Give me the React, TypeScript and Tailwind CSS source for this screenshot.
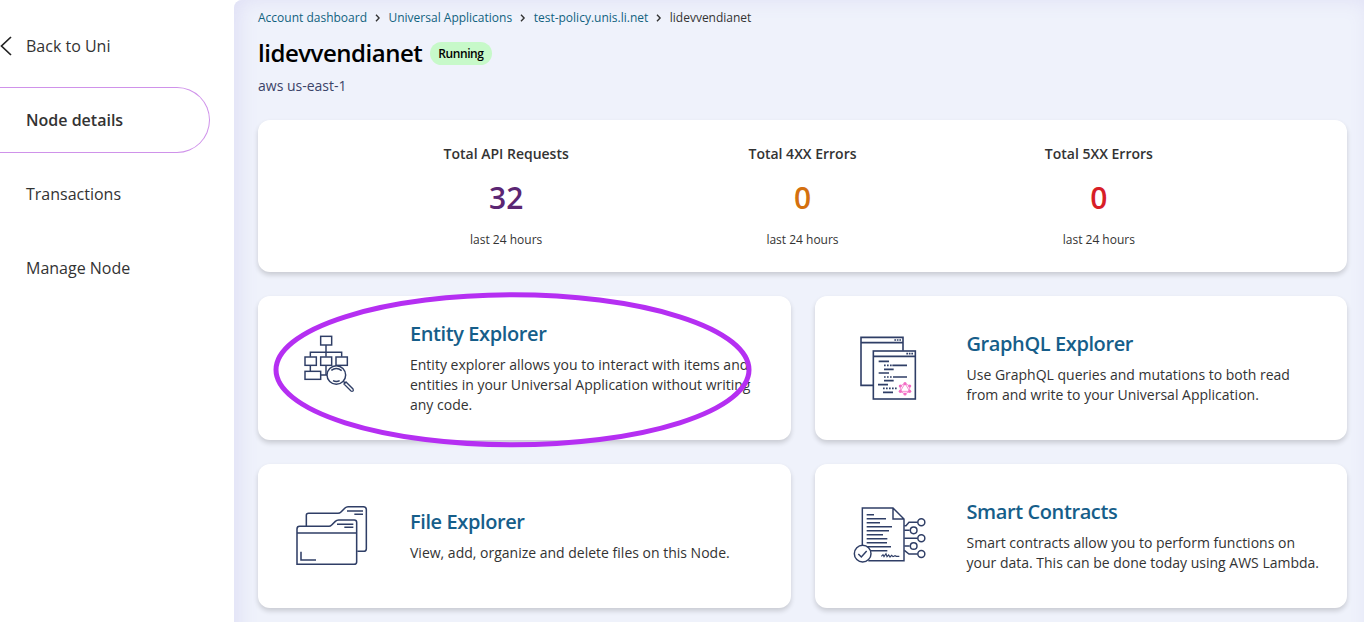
import React from "react";
import type { ReactNode } from "react";

const INK = "#2f3e66";

function Crumb({ children, last }: { children: ReactNode; last?: boolean }) {
  return (
    <>
      <span className={last ? "text-[#333]" : "text-[#11627f]"}>{children}</span>
      {!last && (
        <svg className="mx-[8px] h-[8px] w-[5.5px] shrink-0" viewBox="0 0 5.5 8" fill="none" stroke="#333" strokeWidth="1.4">
          <path d="M1 0.8 4.1 4 1 7.2" />
        </svg>
      )}
    </>
  );
}

function Stat({ label, value, color }: { label: string; value: string; color: string }) {
  return (
    <div className="flex flex-col items-center">
      <div className="text-[14px] leading-5 font-semibold text-[#333]">{label}</div>
      <div className={`mt-[14px] text-[30px] leading-10 font-semibold ${color}`}>{value}</div>
      <div className="mt-[14px] text-[12px] leading-4 text-[#333]">{"last 24 hours"}</div>
    </div>
  );
}

function Card({ title, text, icon, children }: { title: string; text: string; icon: ReactNode; children?: ReactNode }) {
  return (
    <section className="relative flex h-36 items-center rounded-xl bg-white shadow-[0_3px_5px_rgba(0,0,0,0.16)]">
      {icon}
      <div className="min-w-0 flex-1 pr-6 pb-0.5">
        <h2 className="text-[20px] leading-7 font-semibold tracking-[-0.02em] text-[#165e8a]">{title}</h2>
        <p className="mt-[7px] text-[14px] leading-5 whitespace-pre-line text-[#333]">{text}</p>
      </div>
      {children}
    </section>
  );
}

function EntityIcon() {
  return (
    <svg className="h-36 w-[152px] shrink-0" viewBox="-111 -87 456 432" fill="none" stroke={INK} strokeWidth="4.4">
      <rect x="77" y="34" width="33" height="26" />
      <path d="M93 60V95M46 95V82H140V95M46 121V139M93 121V150M77 150H97" />
      <rect x="30" y="96" width="34" height="25" />
      <rect x="77" y="96" width="33" height="25" />
      <rect x="123" y="96" width="34" height="25" />
      <rect x="30" y="139" width="47" height="24" />
      <circle cx="124" cy="150" r="28" fill="white" />
      <path d="M109 136Q124 124 140 137M114 167Q124 172 134 167" />
      <path d="M145 169 151 175" />
      <path d="M147 177 153 171 174 192Q176 196 174 198Q171 200 168 198Z" strokeWidth="4" />
    </svg>
  );
}

function GraphIcon() {
  return (
    <svg className="h-36 w-[152px] shrink-0" viewBox="-105 -96 456 432" fill="none" stroke={INK} strokeWidth="4.8">
      <path d="M159 68V28H33V172H69M33 44H159" />
      <path d="M133 36H155" strokeDasharray="5 2.5" />
      <rect x="70" y="69" width="126" height="144" fill="white" />
      <path d="M70 85H196" />
      <path d="M169 77H191" strokeDasharray="5 2.5" />
      <path d="M86 100H117M102 124H131M86 135H117M102 158H131M84 170H114M99 193H129" />
      <path d="M102 112H128M102 147H128M99 181H140" strokeDasharray="5 4" />
      <path d="M127 112H171M129 147H171" />
      <g stroke="#f58fd2" strokeWidth="3">
        <path d="M165 166 179 174V190L165 198 151 190V174ZM165 166 151 190H179Z" />
      </g>
      <g fill="#f36cc4" stroke="none">
        <circle cx="165" cy="167" r="4.8" />
        <circle cx="179" cy="174" r="4.8" />
        <circle cx="179" cy="190" r="4.8" />
        <circle cx="165" cy="198" r="4.8" />
        <circle cx="151" cy="190" r="4.8" />
        <circle cx="151" cy="174" r="4.8" />
      </g>
    </svg>
  );
}

function FolderIcon() {
  return (
    <svg className="h-36 w-[152px] shrink-0" viewBox="-96 -102 456 432" fill="none" stroke={INK} strokeWidth="4.6">
      <path d="M49 84V52Q49 46 56 46H144Q149 46 153 42L165 30Q169 26 174 26H220Q229 26 229 35V152Q229 160 221 160H202" />
      <path d="M171 39H219M193 49H219" />
      <path d="M21 199V93Q21 85 29 85H117Q121 85 125 81L136 70Q140 66 146 66H193Q200 66 200 73V192Q200 199 192 199Z" />
      <path d="M21 105H200M141 79H190M163 88H190M33 161V186H78" />
    </svg>
  );
}

function ContractIcon() {
  return (
    <svg className="h-36 w-[152px] shrink-0" viewBox="-90 -102 456 432" fill="none" stroke={INK} strokeWidth="4.4">
      <path d="M52 145V30H144L177 63V188H70M144 30V63H177" />
      <path d="M65 50H87M65 62H123M65 74H105M65 86H141M65 98H132M65 110H114M65 122H127M65 134H126M65 146H138M78 158H127" />
      <path d="M109 175 114 170 117 176 123 167 126 176 131 171 135 177 140 172 144 176 150 173 154 175H163" strokeWidth="3.4" />
      <circle cx="53" cy="167" r="25" fill="white" />
      <path d="M40 168 49 177 65 159" />
      <path d="M178 83H183L192 73H218M178 97H194M178 121H218M178 144H194M178 157 192 168H218" />
      <circle cx="229" cy="73" r="10.5" />
      <circle cx="206" cy="97" r="10" />
      <circle cx="229" cy="121" r="10.5" />
      <circle cx="206" cy="144" r="10" />
      <circle cx="229" cy="168" r="10.5" />
    </svg>
  );
}

export default function App() {
  return (
    <div className="flex h-[622px] w-[1364px] overflow-hidden bg-white font-['Open_Sans',sans-serif]">
      <aside className="w-[234px] shrink-0 pt-[13px] text-[16px] text-[#333]">
        <a className="flex h-[66px] items-center">
          <svg className="h-5 w-[13px]" viewBox="0 0 13 20" fill="none" stroke="#222" strokeWidth="1.7">
            <path d="M11 1 1.5 10 11 19" />
          </svg>
          <span className="ml-[13px]">Back to Uni</span>
        </a>
        <nav className="mt-2 flex flex-col gap-2">
          <a className="flex h-[66px] w-[210px] items-center rounded-r-full border border-l-0 border-[#cf92ea] pl-[26px] font-semibold">Node details</a>
          <a className="flex h-[66px] items-center pl-[26px]">Transactions</a>
          <a className="flex h-[66px] items-center pl-[26px]">Manage Node</a>
        </nav>
      </aside>

      <main className="h-[700px] flex-1 rounded-tl-lg bg-[#eff2fb] pr-[17px] pl-6 shadow-[inset_5px_0_20px_#dfdff5]">
        <div className="flex h-[35px] items-center text-[12px]">
          <Crumb>Account dashboard</Crumb>
          <Crumb>Universal Applications</Crumb>
          <Crumb>test-policy.unis.li.net</Crumb>
          <Crumb last>lidevvendianet</Crumb>
        </div>
        <div className="flex h-9 items-center gap-2">
          <h1 className="text-[24px] leading-8 font-semibold tracking-[-0.02em] text-black">lidevvendianet</h1>
          <span className="mt-px flex h-[23px] items-center rounded-full bg-[#c7f9c9] px-2 text-[12px] font-semibold tracking-[-0.035em] text-black">Running</span>
        </div>
        <p className="mt-[5px] text-[14px] leading-5 text-[#3b4368]">aws us-east-1</p>

        <section className="mt-6 grid h-[152px] grid-cols-3 rounded-xl bg-white px-[100px] pt-6 shadow-[0_3px_5px_rgba(0,0,0,0.16)]">
          <Stat label="Total API Requests" value="32" color="text-[#5b2673]" />
          <Stat label="Total 4XX Errors" value="0" color="text-[#d4700f]" />
          <Stat label="Total 5XX Errors" value="0" color="text-[#d81e27]" />
        </section>

        <div className="mt-6 grid grid-cols-2 gap-6">
          <Card
            title="Entity Explorer"
            text={"Entity explorer allows you to interact with items and\nentities in your Universal Application without writing\nany code."}
            icon={<EntityIcon />}
          >
            <svg className="pointer-events-none absolute -top-1 left-3 h-[156px] w-[486px]" viewBox="0 0 486 156" fill="none">
              <ellipse cx="242.5" cy="77.8" rx="236.5" ry="75" stroke="#b52ff2" strokeWidth="5" />
            </svg>
          </Card>
          <Card
            title="GraphQL Explorer"
            text={"Use GraphQL queries and mutations to both read\nfrom and write to your Universal Application."}
            icon={<GraphIcon />}
          />
          <Card title="File Explorer" text="View, add, organize and delete files on this Node." icon={<FolderIcon />} />
          <Card
            title="Smart Contracts"
            text={"Smart contracts allow you to perform functions on\nyour data. This can be done today using AWS Lambda."}
            icon={<ContractIcon />}
          />
        </div>
      </main>
    </div>
  );
}
